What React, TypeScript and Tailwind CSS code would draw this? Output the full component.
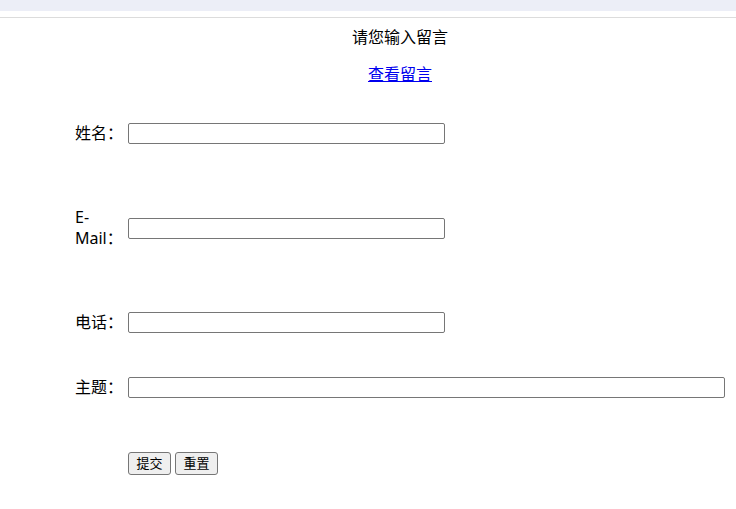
import React from "react";

const font = { fontFamily: '"Noto Sans", "Noto Sans CJK SC", sans-serif' };

function Field({ label, wide }: { label: React.ReactNode; wide?: boolean }) {
  return (
    <div className="flex h-[42px] items-center pl-[75px]">
      <div className="w-[53px] shrink-0 text-[16px] leading-[21px] text-black">{label}</div>
      <input
        type="text"
        className={`${wide ? "w-[597px]" : "w-[317px]"} h-[21px] rounded-[2px] border border-[#767676] bg-white px-[2px] text-[13px] outline-none`}
      />
    </div>
  );
}

export default function App() {
  return (
    <div className="min-h-[509px] w-full overflow-hidden bg-white" style={font}>
      <div className="h-[11px] bg-[#eceef7]" />
      <div className="h-[6px] bg-white" />
      <div className="h-px bg-[#dcdcdc]" />

      <div className="mt-[9px] h-[21px] pl-[64px] text-center text-[16px] leading-[21px] text-black">
        请您输入留言
      </div>
      <div className="mt-[16px] h-[21px] pl-[64px] text-center text-[16px] leading-[21px]">
        <a href="#" className="text-[#0000ee] underline">
          查看留言
        </a>
      </div>

      <div className="mt-[27px]">
        <Field label="姓名：" />
      </div>
      <div className="mt-[53px]">
        <Field
          label={
            <>
              E-
              <br />
              Mail：
            </>
          }
        />
      </div>
      <div className="mt-[52px]">
        <Field label="电话：" />
      </div>
      <div className="mt-[23px]">
        <Field label="主题：" wide />
      </div>

      <div className="mt-[34px] flex h-[42px] items-center gap-[4px] pl-[128px]">
        <button
          type="submit"
          className="flex h-[23px] w-[43px] items-center justify-center rounded-[3px] border border-[#767676] bg-[#efefef] text-[13px] leading-none text-black"
        >
          提交
        </button>
        <button
          type="reset"
          className="flex h-[23px] w-[43px] items-center justify-center rounded-[3px] border border-[#767676] bg-[#efefef] text-[13px] leading-none text-black"
        >
          重置
        </button>
      </div>
    </div>
  );
}
